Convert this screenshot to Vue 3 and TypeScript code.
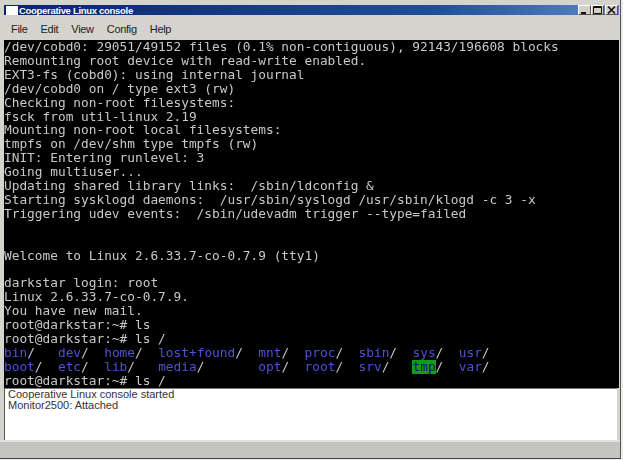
<script setup lang="ts">
const menus: string[] = ['File', 'Edit', 'View', 'Config', 'Help']
const before: string = `/dev/cobd0: 29051/49152 files (0.1% non-contiguous), 92143/196608 blocks
Remounting root device with read-write enabled.
EXT3-fs (cobd0): using internal journal
/dev/cobd0 on / type ext3 (rw)
Checking non-root filesystems:
fsck from util-linux 2.19
Mounting non-root local filesystems:
tmpfs on /dev/shm type tmpfs (rw)
INIT: Entering runlevel: 3
Going multiuser...
Updating shared library links:  /sbin/ldconfig &
Starting sysklogd daemons:  /usr/sbin/syslogd /usr/sbin/klogd -c 3 -x
Triggering udev events:  /sbin/udevadm trigger --type=failed


Welcome to Linux 2.6.33.7-co-0.7.9 (tty1)

darkstar login: root
Linux 2.6.33.7-co-0.7.9.
You have new mail.
root@darkstar:~# ls
root@darkstar:~# ls /`
</script>

<template>
  <div class="win">
    <div class="title">
      <span class="sysicon"></span>
      <span class="title-text">Cooperative Linux console</span>
      <div class="btns">
        <span class="btn"><svg width="9" height="8" viewBox="0 0 9 8"><rect x="1" y="6" width="5" height="2" fill="#111" /></svg></span>
        <span class="btn"><svg width="9" height="8" viewBox="0 0 9 8"><path d="M0.5 0.5H8.5V7.5H0.5Z M0.5 1.5H8.5" fill="none" stroke="#111" /></svg></span>
        <span class="btn btn-close"><svg width="9" height="8" viewBox="0 0 9 8"><path d="M1 0.5L8 7.5M8 0.5L1 7.5" stroke="#111" stroke-width="1.6" /></svg></span>
      </div>
    </div>
    <nav class="menu">
      <span v-for="m in menus" :key="m">{{ m }}</span>
    </nav>
    <pre class="term">{{ before }}
<span class="d">bin</span>/   <span class="d">dev</span>/  <span class="d">home</span>/  <span class="d">lost+found</span>/  <span class="d">mnt</span>/  <span class="d">proc</span>/  <span class="d">sbin</span>/  <span class="d">sys</span>/  <span class="d">usr</span>/
<span class="d">boot</span>/  <span class="d">etc</span>/  <span class="d">lib</span>/   <span class="d">media</span>/       <span class="d">opt</span>/  <span class="d">root</span>/  <span class="d">srv</span>/   <span class="tmp">tmp</span>/  <span class="d">var</span>/
root@darkstar:~# ls /</pre>
    <div class="log">
      <div>Cooperative Linux console started</div>
      <div>Monitor2500: Attached</div>
    </div>
    <div class="status"></div>
  </div>
</template>

<style>
html, body { margin: 0; background: #ececea; }
</style>

<style scoped>
.win {
  width: 621px;
  height: 459px;
  box-sizing: border-box;
  padding: 5px 1px 0 4px;
  background: #d4d3ce;
  border-right: 1px solid #555;
  display: flex;
  flex-direction: column;
  font-family: "Liberation Sans", Arial, sans-serif;
  overflow: hidden;
}
.title {
  height: 10px;
  flex: none;
  display: flex;
  align-items: center;
  padding-left: 2px;
  background: linear-gradient(90deg, #0a246a 0%, #1f4f96 70%, #5a86c2 100%);
  color: #fff;
  font-size: 9.5px;
  letter-spacing: -0.3px;
  font-weight: 700;
}
.sysicon {
  width: 12px;
  height: 9px;
  background: #fff;
  margin-right: 1px;
}
.title-text { flex: 1; white-space: nowrap; }
.btns { display: flex; margin-right: 1px; }
.btn {
  width: 13px;
  height: 10px;
  background: #d4d0c8;
  border: 1px solid;
  border-color: #fff #555 #555 #fff;
  box-sizing: border-box;
  display: flex;
  align-items: center;
  justify-content: center;
}
.btn-close { margin-left: 1px; }
.menu {
  height: 25px;
  flex: none;
  box-sizing: border-box;
  padding: 3px 0 0 7px;
  display: flex;
  align-items: center;
  gap: 13px;
  font-size: 11px;
  letter-spacing: -0.3px;
  color: #222;
}
.term {
  margin: 0;
  height: 348px;
  flex: none;
  background: #000;
  color: #c8c8c8;
  font-family: "DejaVu Sans Mono", "Liberation Mono", monospace;
  font-size: 12.8px;
  line-height: 13.9px;
  white-space: pre;
  overflow: hidden;
  filter: blur(0.3px);
}
.d, .tmp { display: inline-block; line-height: 13.9px; vertical-align: top; }
.d { color: #5050d8; }
.tmp { color: #0a0a7a; background: #0ca00c; }
.log {
  flex: none;
  height: 52px;
  box-sizing: border-box;
  background: #fff;
  border-left: 1px solid #555;
  border-top: 1px solid #777;
  margin-right: 2px;
  padding: 0 3px;
  font-size: 11px;
  line-height: 11px;
  color: #333;
}
.status {
  flex: 1;
  background: #c4c4c2;
  border-top: 2px solid #e4e2dc;
  border-bottom: 1px solid #444;
  margin-left: -4px;
  margin-right: -1px;
}
</style>
